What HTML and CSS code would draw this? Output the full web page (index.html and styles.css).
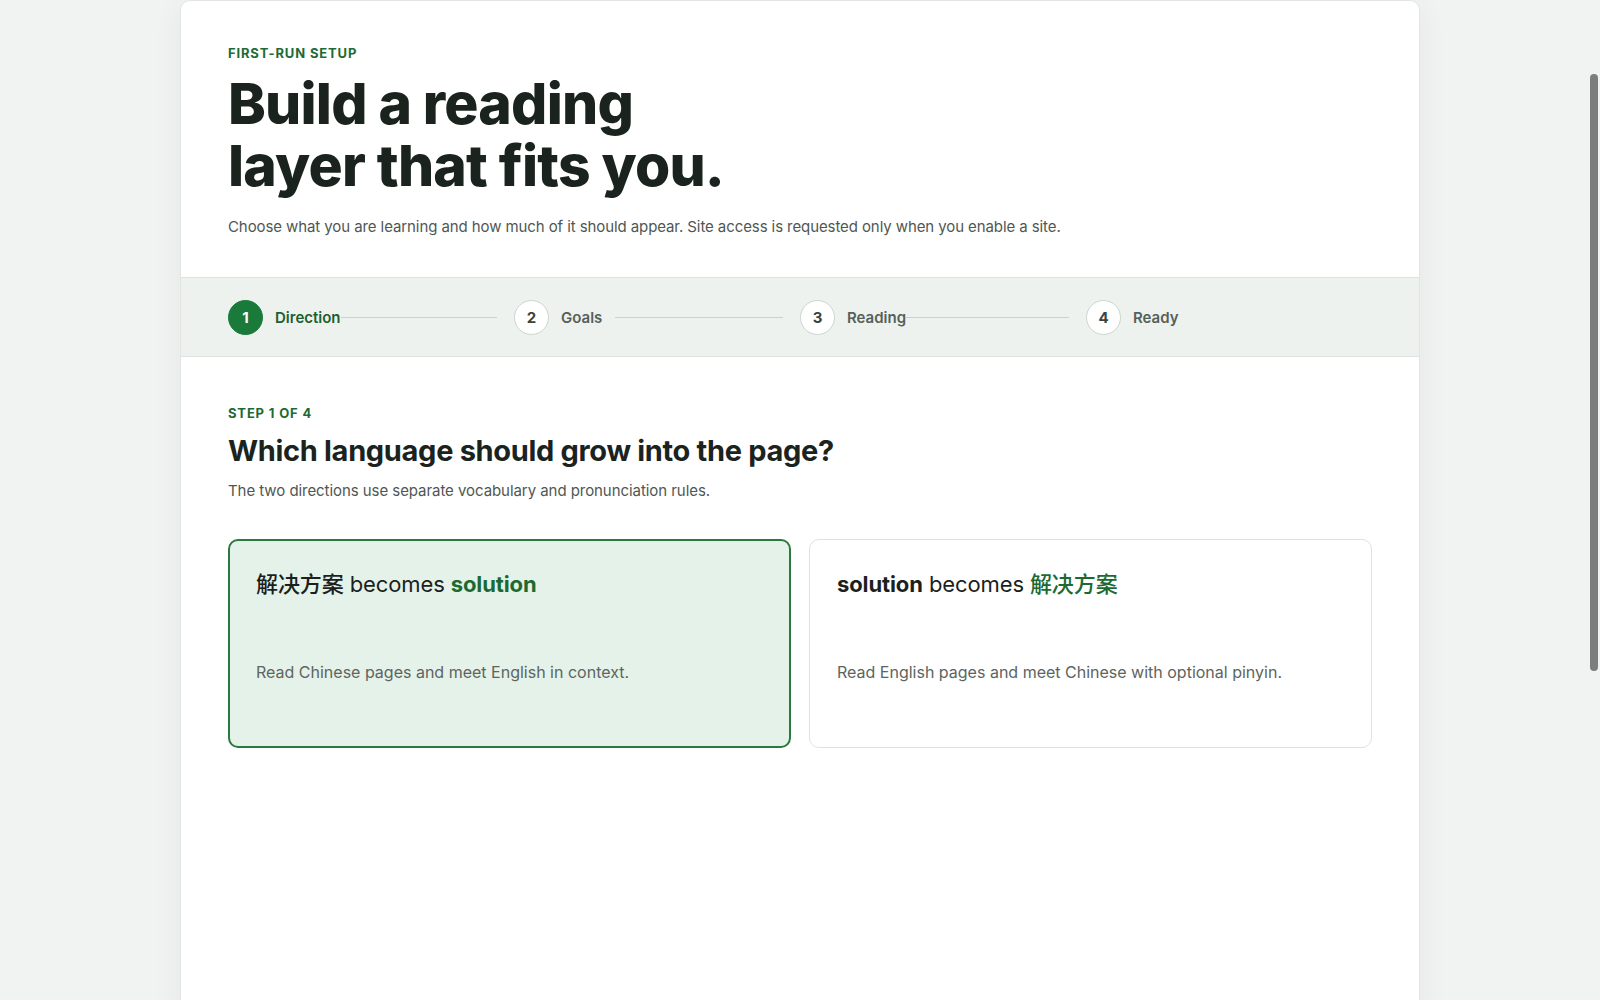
FILE: index.html
```html
<!DOCTYPE html>
<html lang="en">
<head>
<meta charset="utf-8">
<title>First-run setup</title>
<link rel="stylesheet" href="styles.css">
</head>
<body>
<main class="shell">
  <header class="hero">
    <p class="eyebrow">FIRST-RUN SETUP</p>
    <h1 class="hero-title">Build a reading<br>layer that fits you.</h1>
    <p class="hero-sub">Choose what you are learning and how much of it should appear. Site access is requested only when you enable a site.</p>
  </header>

  <nav class="stepper">
    <div class="step is-active">
      <span class="step-num">1</span>
      <span class="step-label">Direction</span>
      <span class="step-line"></span>
    </div>
    <div class="step">
      <span class="step-num">2</span>
      <span class="step-label">Goals</span>
      <span class="step-line"></span>
    </div>
    <div class="step">
      <span class="step-num">3</span>
      <span class="step-label">Reading</span>
      <span class="step-line"></span>
    </div>
    <div class="step">
      <span class="step-num">4</span>
      <span class="step-label">Ready</span>
    </div>
  </nav>

  <section class="panel">
    <p class="eyebrow">STEP 1 OF 4</p>
    <h2 class="panel-title">Which language should grow into the page?</h2>
    <p class="panel-sub">The two directions use separate vocabulary and pronunciation rules.</p>

    <div class="choices">
      <button class="choice is-selected" type="button">
        <span class="choice-title"><span class="cjk">解决方案</span> becomes <strong class="accent">solution</strong></span>
        <span class="choice-desc">Read Chinese pages and meet English in context.</span>
      </button>
      <button class="choice" type="button">
        <span class="choice-title"><strong>solution</strong> becomes <span class="cjk accent">解决方案</span></span>
        <span class="choice-desc">Read English pages and meet Chinese with optional pinyin.</span>
      </button>
    </div>
  </section>
</main>
<div class="scroll-thumb"></div>
</body>
</html>
```

FILE: styles.css
```css
* { box-sizing: border-box; }

html, body {
  margin: 0;
  height: 100%;
  overflow: hidden;
}

body {
  background: #f1f3f2;
  font-family: Inter, "Noto Sans", "Noto Sans CJK SC", sans-serif;
  color: #1b231f;
}

.shell {
  width: 1240px;
  margin: 0 auto;
  min-height: 1100px;
  background: #ffffff;
  border: 1px solid #e2e6e3;
  border-radius: 10px;
  box-shadow: 0 6px 30px rgba(30, 50, 40, 0.06);
}

.eyebrow {
  margin: 0;
  font-size: 13px;
  font-weight: 700;
  letter-spacing: 0.065em;
  color: #1d6a34;
  line-height: 16px;
}

.hero {
  padding: 44px 47px 39px;
}

.hero-title {
  margin: 12px 0 0;
  font-size: 57px;
  line-height: 62px;
  font-weight: 800;
  letter-spacing: -0.014em;
  color: #1b231f;
}

.hero-sub {
  margin: 19px 0 0;
  font-size: 15px;
  line-height: 22px;
  letter-spacing: -0.006em;
  color: #4f5753;
}

.stepper {
  display: grid;
  grid-template-columns: repeat(4, 1fr);
  padding: 20px 47px;
  background: #eef2ef;
  border-top: 1px solid #dde3df;
  border-bottom: 1px solid #dde3df;
}

.step {
  display: flex;
  align-items: center;
  height: 38px;
}

.step-num {
  flex: 0 0 auto;
  width: 35px;
  height: 35px;
  border-radius: 50%;
  border: 1px solid #cdd5d0;
  background: #ffffff;
  display: flex;
  align-items: center;
  justify-content: center;
  font-size: 15px;
  font-weight: 700;
  color: #3b433f;
}

.step-label {
  flex: 0 0 54px;
  margin-left: 12px;
  white-space: nowrap;
  font-size: 15px;
  font-weight: 600;
  color: #56605a;
}

.step-line {
  flex: 1;
  height: 1px;
  margin-right: 17px;
  background: #c9d1cc;
}

.step.is-active .step-num {
  background: #1a7a3a;
  border-color: #1a7a3a;
  color: #ffffff;
}

.step.is-active .step-label {
  color: #1d5e30;
}

.panel {
  padding: 48px 47px;
}

.panel-title {
  margin: 12px 0 0;
  font-size: 29px;
  line-height: 36px;
  font-weight: 700;
  letter-spacing: -0.011em;
  color: #1b231f;
}

.panel-sub {
  margin: 11px 0 0;
  font-size: 15px;
  line-height: 22px;
  letter-spacing: -0.004em;
  color: #4f5753;
}

.choices {
  display: grid;
  grid-template-columns: 1fr 1fr;
  gap: 18px;
  margin-top: 37px;
}

.choice {
  display: flex;
  flex-direction: column;
  align-items: flex-start;
  height: 209px;
  padding: 25px 27px;
  text-align: left;
  font-family: inherit;
  background: #ffffff;
  border: 1px solid #dfe3e0;
  border-radius: 10px;
  cursor: pointer;
}

.choice.is-selected {
  background: #e5f2e9;
  border: 2px solid #2a7a40;
  padding: 24px 26px;
}

.choice-title {
  font-size: 22px;
  line-height: 34px;
  font-weight: 400;
  color: #1b1f1d;
  letter-spacing: -0.005em;
}

.choice-title strong {
  font-weight: 700;
}

.cjk {
  font-family: "Noto Sans CJK SC", sans-serif;
  font-weight: 500;
}

.accent {
  color: #1c6a32;
}

.choice-desc {
  margin-top: 59px;
  font-size: 16px;
  line-height: 24px;
  color: #5c6560;
}

.scroll-thumb {
  position: fixed;
  top: 74px;
  right: 2px;
  width: 8px;
  height: 597px;
  border-radius: 4px;
  background: #7c7e7d;
}
```
